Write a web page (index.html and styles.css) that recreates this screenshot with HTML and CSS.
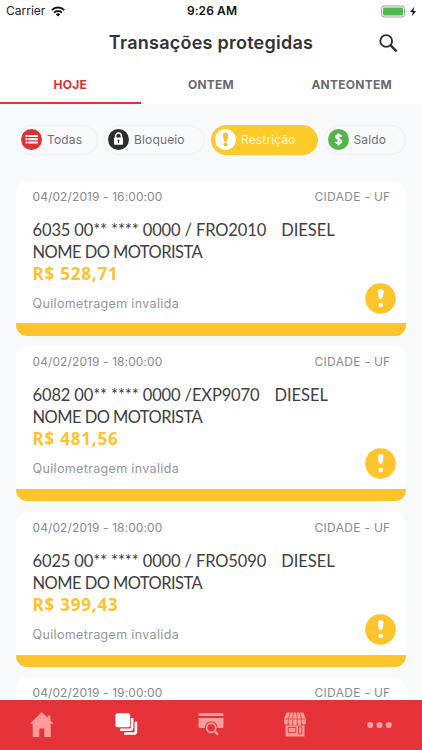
FILE: index.html
```html
<!DOCTYPE html>
<html lang="pt-BR">
<head>
<meta charset="utf-8">
<title>Transações protegidas</title>
<link rel="stylesheet" href="styles.css">
</head>
<body>
<div class="app">
<header class="header">
  <div class="status">
    <div class="carrier"><span class="carrier-name">Carrier</span>
      <svg width="14" height="11" viewBox="0 0 14 11" fill="none" stroke="#111" stroke-width="2"><path d="M.8 4.1a9 9 0 0 1 12.4 0M3 6.6a5.8 5.8 0 0 1 8 0"/><path d="M7 10.4 4.8 8.3a3.2 3.2 0 0 1 4.4 0z" fill="#111" stroke="none"/></svg>
    </div>
    <div class="time">9:26 AM</div>
    <div class="battery">
      <svg width="37" height="13" viewBox="0 0 37 13"><rect x=".5" y="1" width="23" height="11" rx="2.5" fill="#fff" stroke="#8a8a8a" stroke-width=".8"/><rect x="2" y="2.5" width="20" height="8" rx="1.2" fill="#4fba50"/><path d="M24.8 4.7q1.5 1.8 0 3.6z" fill="#888"/><path d="M33.2 1.7 29.2 7h2.7l-1.1 4.3L35.2 6h-2.8z" fill="#111"/></svg>
    </div>
  </div>
  <div class="titlebar">
    <h1 class="title">Transações protegidas</h1>
    <svg class="search" width="19" height="19" viewBox="0 0 19 19" fill="none" stroke="#2e2e2e"><circle cx="7.2" cy="7" r="5.900" stroke-width="1.900"/><path d="m11.4 11.2 6.2 6.1" stroke-width="2.4"/></svg>
  </div>
  <nav class="tabs">
    <div class="tab tab-active"><span>HOJE</span></div>
    <div class="tab"><span>ONTEM</span></div>
    <div class="tab"><span>ANTEONTEM</span></div>
  </nav>
</header>
<main class="content">
  <div class="chips">
    <div class="chip chip-all">
      <svg width="21" height="21" viewBox="0 0 21 21"><circle cx="10.5" cy="10.5" r="10.5" fill="#dd3037"/><path d="M4.5 6h2v2h-2zM7.3 6h9.6v2H7.3zM4.5 9.3h2v2h-2zM7.3 9.3h9.6v2H7.3zM4.5 12.6h2v2h-2zM7.3 12.6h9.6v2H7.3z" fill="#fff"/></svg>
      <span>Todas</span>
    </div>
    <div class="chip chip-lock">
      <svg width="21" height="21" viewBox="0 0 21 21"><circle cx="10.5" cy="10.5" r="10.5" fill="#2d2d2d"/><path d="M7.6 9V7a2.9 2.9 0 0 1 5.8 0v2" fill="none" stroke="#fff" stroke-width="1.5"/><rect x="6" y="8.6" width="9" height="7.2" rx=".8" fill="#fff"/><path d="M10.5 10.5a1.1 1.1 0 0 0-.5 2v1.5h1v-1.5a1.1 1.1 0 0 0-.5-2" fill="#2d2d2d"/></svg>
      <span>Bloqueio</span>
    </div>
    <div class="chip chip-warn">
      <svg width="21" height="21" viewBox="0 0 21 21"><circle cx="10.5" cy="10.5" r="10.5" fill="#fff"/><path d="M8 6q0-2.5 2.5-2.5T13 6q0 3.5-1.2 6.2-1.3 1-2.6 0Q8 9.500 8 6" fill="#f9bd26"/><circle cx="10.500" cy="15.500" r="2.100" fill="#f9bd26"/></svg>
      <span>Restrição</span>
    </div>
    <div class="chip chip-money">
      <svg width="21" height="21" viewBox="0 0 21 21"><circle cx="10.5" cy="10.5" r="10.5" fill="#56b54a"/><path d="M13.6 7.400Q12.300 6.300 10.500 6.300 8 6.300 8 8.200c0 1.900 5.300 1.800 5.300 4.100q0 2-2.700 2-2 0-3.400-1.200M10.500 4.400v12" fill="none" stroke="#fff" stroke-width="1.900"/></svg>
      <span>Saldo</span>
    </div>
  </div>
  <section class="list">
    <article class="card">
      <div class="meta"><span class="date">04/02/2019 - 16:00:00</span><span class="city">CIDADE - UF</span></div>
      <div class="line"><span class="card-id">6035 00** **** 0000 / FRO2010</span><span class="fuel">DIESEL</span></div>
      <div class="driver">NOME DO MOTORISTA</div>
      <div class="amount">R$ 528,71</div>
      <div class="reason">Quilometragem invalida</div>
      <svg class="alert" width="31" height="31" viewBox="0 0 31 31"><circle cx="15.500" cy="15.500" r="15.300" fill="#fec42b"/><path d="M12.900 8.500q0-2.500 2.800-2.500t2.800 2.500q0 4-1.200 7-1.600 1.300-3.200 0-1.200-3-1.200-7" fill="#fff"/><circle cx="15.700" cy="22" r="2.300" fill="#fff"/></svg>
    </article>
    <article class="card">
      <div class="meta"><span class="date">04/02/2019 - 18:00:00</span><span class="city">CIDADE - UF</span></div>
      <div class="line"><span class="card-id">6082 00** **** 0000 /EXP9070</span><span class="fuel">DIESEL</span></div>
      <div class="driver">NOME DO MOTORISTA</div>
      <div class="amount">R$ 481,56</div>
      <div class="reason">Quilometragem invalida</div>
      <svg class="alert" width="31" height="31" viewBox="0 0 31 31"><circle cx="15.500" cy="15.500" r="15.300" fill="#fec42b"/><path d="M12.900 8.500q0-2.500 2.800-2.500t2.800 2.500q0 4-1.200 7-1.600 1.300-3.200 0-1.200-3-1.200-7" fill="#fff"/><circle cx="15.700" cy="22" r="2.300" fill="#fff"/></svg>
    </article>
    <article class="card">
      <div class="meta"><span class="date">04/02/2019 - 18:00:00</span><span class="city">CIDADE - UF</span></div>
      <div class="line"><span class="card-id">6025 00** **** 0000 / FRO5090</span><span class="fuel">DIESEL</span></div>
      <div class="driver">NOME DO MOTORISTA</div>
      <div class="amount">R$ 399,43</div>
      <div class="reason">Quilometragem invalida</div>
      <svg class="alert" width="31" height="31" viewBox="0 0 31 31"><circle cx="15.500" cy="15.500" r="15.300" fill="#fec42b"/><path d="M12.900 8.500q0-2.500 2.800-2.500t2.800 2.500q0 4-1.200 7-1.600 1.300-3.200 0-1.200-3-1.200-7" fill="#fff"/><circle cx="15.700" cy="22" r="2.300" fill="#fff"/></svg>
    </article>
    <article class="card">
      <div class="meta"><span class="date">04/02/2019 - 19:00:00</span><span class="city">CIDADE - UF</span></div>
    </article>
  </section>
</main>
<footer class="nav">
  <div class="item"><svg width="24" height="25" viewBox="0 0 24 25" fill="#fe9c98"><path d="M11.700 0 0 11.700h2.700V25h6.600v-8.400h5V25h6.500V11.700h2.800L20.500 8.500V3.500h-2.800v2.300z"/></svg></div>
  <div class="item"><svg width="24" height="23" viewBox="0 0 24 23" fill="none" stroke="#fff" stroke-width="2.600"><path d="M17.100 5v9.600q0 2.100-2.100 2.100H5.200M20.900 8.700v9.700q0 2.100-2.100 2.100H9.200"/><rect x=".5" y=".3" width="14.600" height="14" rx="2" fill="#fff" stroke="none"/></svg></div>
  <div class="item"><svg width="26" height="23" viewBox="0 0 26 23"><path d="M2 0h22q1.500 0 1.500 1.500V3H.5V1.500Q.5 0 2 0M.5 5h25v8.500q0 1.500-1.500 1.500H2Q.5 15 .5 13.500z" fill="#fe9c98"/><circle cx="13.200" cy="14.800" r="5.500" fill="#e43238" stroke="#e43238" stroke-width="2"/><circle cx="13.200" cy="14.800" r="4.600" fill="none" stroke="#fe9c98" stroke-width="1.900"/><path d="m16.500 18.100 3.400 3.600" stroke="#fe9c98" stroke-width="2.200"/></svg></div>
  <div class="item"><svg width="24" height="25" viewBox="0 0 24 25" fill="#fe9c98"><path d="M3.500.5h16.800L23 6.800v3a2.200 2.200 0 0 1-4.400 1.300 2.200 2.200 0 0 1-4.400 0 2.200 2.200 0 0 1-4.500 0 2.200 2.200 0 0 1-4.400 0A2.200 2.200 0 0 1 1 9.800v-3z"/><path d="M7.300 0 5.300 7v5M10.400 0l-.7 7v5M13.500 0l.7 7v5M16.600 0l2 7v5M.5 7h23" fill="none" stroke="#e43238" stroke-width=".7"/><path d="M2.500 13.500h19v11h-19z"/><path d="M5.300 15.500h7.500v5H5.300zM15.500 15h3.300v7h-3.300z" fill="none" stroke="#e43238" stroke-width=".9"/></svg></div>
  <div class="item"><svg width="25" height="8" viewBox="0 0 25 8" fill="#fe9c98"><circle cx="3.200" cy="4" r="3.100"/><circle cx="12.500" cy="4" r="3.100"/><circle cx="21.800" cy="4" r="3.100"/></svg></div>
</footer>
</div>
</body>
</html>
```
FILE: styles.css
```css
* { box-sizing: border-box; }
body { margin: 0; font-family: Lato, sans-serif; }
svg { display: block; flex: none; }
.app { width: 422px; height: 750px; display: flex; flex-direction: column; overflow: hidden; background: #f9fafc; }
.header { flex: none; height: 104px; background: #fefefe; }
.status { height: 22px; display: grid; grid-template-columns: 1fr auto 1fr; align-items: center; padding: 0 4px 0 6px; font: 12px/22px Inter, sans-serif; color: #222; }
.carrier { display: flex; align-items: center; gap: 6px; }
.time { font-weight: 600; font-size: 12px; letter-spacing: .1px; color: #111; }
.battery { justify-self: end; }
.titlebar { height: 42px; display: grid; grid-template-columns: 1fr auto 1fr; align-items: center; padding: 0 24px; }
.title { grid-column: 2; margin: 0; font: 600 18px/42px Inter, sans-serif; color: #333; white-space: nowrap; letter-spacing: .25px; }
.search { justify-self: end; }
.tabs { height: 40px; display: grid; grid-template-columns: repeat(3, 1fr); }
.tab { display: flex; align-items: flex-start; justify-content: center; height: 40px; padding-top: 4px; font: 700 12px/34px Inter, sans-serif; letter-spacing: .25px; color: #6b6b6e; border-bottom: 2px solid transparent; }
.tab-active { color: #dd3037; border-color: #dd3037; }
.content { flex: 1; min-height: 0; overflow: hidden; padding: 20.500px 16px 0; }
.chips { display: flex; height: 30px; gap: 6px; }
.chip { display: flex; align-items: center; gap: 5px; height: 30px; padding-left: 4px; border: 1px solid #f0f1f3; border-radius: 15px; font: 12px/28px Inter, sans-serif; color: #717174; letter-spacing: .15px; }
.chip-all { width: 82px; }
.chip-lock { width: 101px; padding-left: 3px; }
.chip-warn { width: 106.500px; padding-left: 3px; background: #fecb2b; border-color: #fec42b; color: #fff8d8; }
.chip-money { width: 82px; padding-left: 3px; }
.list { margin-top: 26.500px; display: flex; flex-direction: column; gap: 10.600px; }
.card { position: relative; flex: none; height: 154.900px; padding: 8px 15.500px 0 16.500px; background: #fefefe linear-gradient(to top, #fec42b 12.500px, transparent 12.500px); border-radius: 11px; }
.meta { display: flex; justify-content: space-between; font: 12px/16px Inter, sans-serif; color: #8b8b8d; }
.date { letter-spacing: .1px; }
.city { letter-spacing: .3px; }
.line { display: flex; gap: 15px; margin-top: 14px; font-size: 16.500px; line-height: 22px; color: #404042; white-space: nowrap; }
.card-id { letter-spacing: -.13px; }
.driver { font-size: 16.500px; line-height: 22px; letter-spacing: -.55px; color: #404042; }
.amount { font: 700 17px/22px "Noto Sans", sans-serif; letter-spacing: .8px; color: #fdc22e; }
.reason { margin-top: 11px; font: 12.500px/16px Inter, sans-serif; letter-spacing: .35px; color: #969698; }
.alert { position: absolute; right: 10px; bottom: 22px; }
.nav { flex: none; height: 50.500px; display: grid; grid-template-columns: repeat(5, 1fr); background: #e43238; }
.item { display: flex; align-items: center; justify-content: center; }
```
